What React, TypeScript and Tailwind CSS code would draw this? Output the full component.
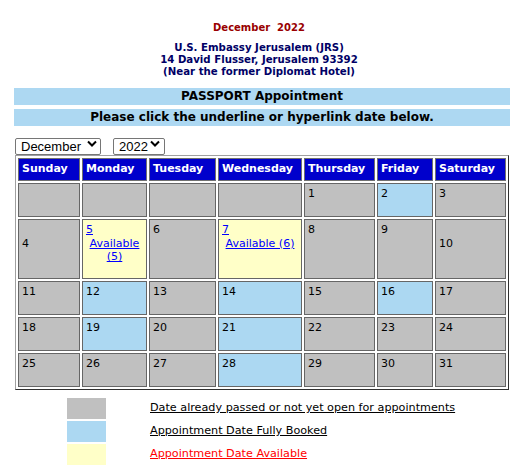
import React from "react";

type Cell = {
  day?: number;
  kind: "past" | "booked" | "open";
  avail?: number;
  wrap?: boolean;
  low?: boolean;
};

const days = ["Sunday", "Monday", "Tuesday", "Wednesday", "Thursday", "Friday", "Saturday"];

const booked = [2, 12, 14, 16, 19, 21, 28];

const buildCells = (): Cell[] => {
  const cells: Cell[] = [];
  for (let i = 0; i < 4; i++) cells.push({ kind: "past" });
  for (let d = 1; d <= 31; d++) {
    if (d === 5) cells.push({ day: d, kind: "open", avail: 5, wrap: true });
    else if (d === 7) cells.push({ day: d, kind: "open", avail: 6 });
    else
      cells.push({
        day: d,
        kind: booked.includes(d) ? "booked" : "past",
        low: d === 4 || d === 10,
      });
  }
  return cells;
};

const bgFor = {
  past: "bg-[#c0c0c0]",
  booked: "bg-[#acd8f2]",
  open: "bg-[#ffffc8]",
};

const Chevron = ({ className }: { className: string }) => (
  <svg className={`pointer-events-none absolute h-[7px] w-[10px] ${className}`} viewBox="0 0 10 7">
    <path d="M1 1.5 L5 5.5 L9 1.5" fill="none" stroke="#000" strokeWidth="2" />
  </svg>
);

const App = () => {
  const cells = buildCells();

  return (
    <div className="w-[518px] min-h-[476px] bg-white font-['DejaVu_Sans',Verdana,sans-serif] text-black">
      {/* Title */}
      <div className="pt-[21px] text-center text-[10px] leading-[13px] font-bold text-[#990000]">
        December&nbsp; 2022
      </div>
      <div className="mt-[8px] text-center text-[10.2px] leading-[12px] font-bold text-[#000066]">
        <div>U.S. Embassy Jerusalem (JRS)</div>
        <div>14 David Flusser, Jerusalem 93392</div>
        <div>(Near the former Diplomat Hotel)</div>
      </div>

      {/* Bars */}
      <div className="ml-[14px] mt-[10px] flex w-[496px] flex-col gap-[4px]">
        <div className="h-[17px] bg-[#add8f2] text-center text-[12px] leading-[17px] font-bold">
          PASSPORT Appointment
        </div>
        <div className="h-[17px] bg-[#add8f2] text-center text-[12px] leading-[17px] font-bold">
          Please click the underline or hyperlink date below.
        </div>
      </div>

      {/* Selects */}
      <div className="ml-[15px] mt-[8px] flex gap-[12px] font-['Liberation_Sans',Arial,sans-serif]">
        <div className="relative h-[17px] w-[86px]">
          <select
            defaultValue="December"
            className="h-full w-full appearance-none rounded-[2px] border border-[#767676] bg-white pl-[5px] text-[13px] leading-[15px] outline-none"
          >
            <option>December</option>
          </select>
          <Chevron className="right-[4px] top-[6px]" />
        </div>
        <div className="relative h-[17px] w-[52px]">
          <select
            defaultValue="2022"
            className="h-full w-full appearance-none rounded-[2px] border border-[#767676] bg-white pl-[5px] text-[13px] leading-[15px] outline-none"
          >
            <option>2022</option>
          </select>
          <Chevron className="right-[5px] top-[6px]" />
        </div>
      </div>

      {/* Calendar */}
      <div className="ml-[15px] mt-[4px] w-[494px] border border-t-[#a0a0a0] border-l-[#a0a0a0] border-r-[#303030] border-b-[#303030] p-[2px]">
        <div className="grid grid-cols-[62px_65px_67px_84px_71px_56px_71px] grid-rows-[23px_34px_60px_34px_34px_34px] gap-[2px]">
          {days.map((d) => (
            <div
              key={d}
              className="flex items-center border border-[#707070] bg-[#0000cc] pl-[3px] text-[11px] font-bold text-white"
            >
              {d}
            </div>
          ))}
          {cells.map((c, i) => (
            <div
              key={i}
              className={`border border-[#666666] ${bgFor[c.kind]} px-[3px] text-[11px] ${
                c.low ? "pt-[17px] leading-[13px]" : "pt-[3px] leading-[13.5px]"
              }`}
            >
              {c.kind === "open" ? (
                <>
                  <a href="#" className="text-[#0000ff] underline">
                    {c.day}
                  </a>
                  <div className="text-center">
                    <a href="#" className="text-[#0000ff] underline">
                      {c.wrap ? (
                        <>
                          Available
                          <br />({c.avail})
                        </>
                      ) : (
                        <>Available ({c.avail})</>
                      )}
                    </a>
                  </div>
                </>
              ) : (
                c.day
              )}
            </div>
          ))}
        </div>
      </div>

      {/* Legend */}
      <div className="ml-[67px] mt-[8px] flex flex-col gap-[2px] text-[11.2px]">
        <div className="flex items-center">
          <div className="h-[21px] w-[39px] bg-[#c0c0c0]" />
          <a href="#" className="ml-[44px] text-black underline">
            Date already passed or not yet open for appointments
          </a>
        </div>
        <div className="flex items-center">
          <div className="h-[21px] w-[39px] bg-[#acd8f2]" />
          <a href="#" className="ml-[44px] text-black underline">
            Appointment Date Fully Booked
          </a>
        </div>
        <div className="flex items-center">
          <div className="h-[21px] w-[39px] bg-[#ffffc8]" />
          <a href="#" className="ml-[44px] text-[#ff0000] underline">
            Appointment Date Available
          </a>
        </div>
      </div>
    </div>
  );
};

export default App;
